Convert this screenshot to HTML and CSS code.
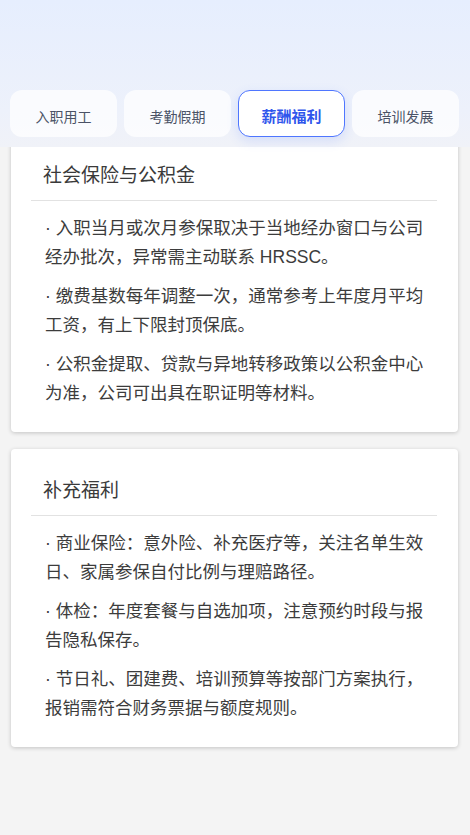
FILE: index.html
```html
<!DOCTYPE html>
<html lang="zh-CN">
<head>
    <meta charset="UTF-8">
    <meta name="viewport" content="width=device-width, initial-scale=1.0">
    <title>员工手册 - 薪酬福利</title>
    <link rel="stylesheet" href="styles.css">
</head>
<body>
    <header class="top">
        <nav class="tabs">
            <div class="tab">入职用工</div>
            <div class="tab">考勤假期</div>
            <div class="tab active">薪酬福利</div>
            <div class="tab">培训发展</div>
        </nav>
    </header>

    <main class="content">
        <section class="card">
            <h2 class="card-title">社会保险与公积金</h2>
            <div class="card-body">
                <p>· 入职当月或次月参保取决于当地经办窗口与公司经办批次，异常需主动联系 HRSSC。</p>
                <p>· 缴费基数每年调整一次，通常参考上年度月平均工资，有上下限封顶保底。</p>
                <p>· 公积金提取、贷款与异地转移政策以公积金中心为准，公司可出具在职证明等材料。</p>
            </div>
        </section>

        <section class="card">
            <h2 class="card-title">补充福利</h2>
            <div class="card-body">
                <p>· 商业保险：意外险、补充医疗等，关注名单生效日、家属参保自付比例与理赔路径。</p>
                <p>· 体检：年度套餐与自选加项，注意预约时段与报告隐私保存。</p>
                <p>· 节日礼、团建费、培训预算等按部门方案执行，报销需符合财务票据与额度规则。</p>
            </div>
        </section>
    </main>
</body>
</html>
```

FILE: styles.css
```css
body {
    margin: 0;
    font-family: "Liberation Sans", "Noto Sans CJK SC", sans-serif;
    color: #333;
    background: #f4f4f4;
}

.top {
    position: sticky;
    top: 0;
    z-index: 2;
    padding: 90px 11px 10px 10px;
    background: linear-gradient(180deg, #e6eefe 0%, #edf1fb 75%, #f0f2f8 100%);
}

.tabs {
    display: grid;
    grid-template-columns: repeat(4, 1fr);
    gap: 7px;
}

.tab {
    display: flex;
    justify-content: center;
    align-items: center;
    height: 47px;
    box-sizing: border-box;
    padding-top: 4px;
    font-size: 14px;
    color: #4b5366;
    background: rgba(255, 255, 255, 0.72);
    border: 1px solid transparent;
    border-radius: 12px;
}

.tab.active {
    font-size: 15px;
    font-weight: bold;
    color: #2f56ec;
    background: #fff;
    border-color: #4f76ff;
    box-shadow: 0 4px 12px rgba(70, 110, 255, 0.16);
}

/* first card slides a little under the sticky tab bar */
.content {
    display: flex;
    flex-direction: column;
    gap: 17px;
    margin-top: -13px;
    padding: 0 12px 150px 11px;
}

.card {
    padding: 28px 21px 25px 20px;
    background: #fff;
    border-radius: 4px;
    box-shadow: 0 1px 4px rgba(0, 0, 0, 0.2);
}

.card-title {
    margin: 0;
    padding: 0 12px 10px;
    font-size: 19px;
    font-weight: normal;
    line-height: 28px;
    color: #3a3a3a;
    border-bottom: 1px solid #e2e2e2;
}

.card-body {
    margin-top: 13px;
    padding-left: 14px;
}

.card-body p {
    margin: 0 0 11px;
    font-size: 17.5px;
    line-height: 28.5px;
    color: #3c3c3c;
}

.card-body p:last-child {
    margin-bottom: 0;
}
```
